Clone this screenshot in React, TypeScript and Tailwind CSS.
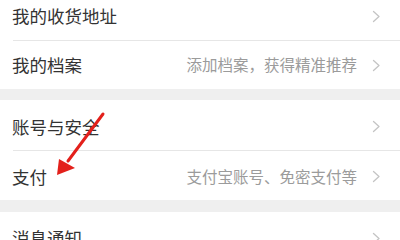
import React from "react";

function Chevron() {
  return (
    <svg width="9" height="13" viewBox="0 0 9 13" className="shrink-0">
      <path d="M1.5 1.5 L7 6.5 L1.5 11.5" fill="none" stroke="#c4c4c4" strokeWidth="1.3" strokeLinecap="round" strokeLinejoin="round" />
    </svg>
  );
}

function Row({ title, sub, divider, h, extra }: { title: string; sub?: string; divider?: boolean; h: string; extra?: string }) {
  return (
    <div className={`flex items-stretch bg-white ${h} ${extra ?? ""}`}>
      <div className={`flex flex-1 items-center ml-[13px] pr-[19px] ${divider ? "border-b border-[#e6e6e6]" : ""}`}>
        <span className="flex-1 text-[17.5px] text-[#333333] leading-none -ml-[1px]">{title}</span>
        {sub && <span className="text-[15.5px] text-[#9b9b9b] leading-none mr-[15px]">{sub}</span>}
        <Chevron />
      </div>
    </div>
  );
}

export default function App() {
  return (
    <div
      className="relative w-[400px] h-[240px] overflow-hidden bg-[#efefef]"
      style={{ fontFamily: '"Noto Sans CJK SC", "Noto Sans", sans-serif' }}
    >
      <div className="flex flex-col">
        <Row title="我的收货地址" divider h="h-[49px]" extra="-mt-[8px]" />
        <Row title="我的档案" sub="添加档案，获得精准推荐" h="h-[48px]" />
        <div className="h-[11px]" />
        <Row title="账号与安全" divider h="h-[51px]" extra="pt-[3px]" />
        <Row title="支付" sub="支付宝账号、免密支付等" h="h-[49px]" extra="pt-[2px]" />
        <div className="h-[12px]" />
        <Row title="消息通知" h="h-[52px]" />
      </div>
      <svg className="absolute left-0 top-0" width="400" height="240" viewBox="0 0 400 240">
        <line x1="103" y1="114" x2="68" y2="161" stroke="#e3201b" strokeWidth="3" strokeLinecap="round" />
        <polygon points="57,175 59,159 75,168" fill="#e3201b" />
      </svg>
    </div>
  );
}
